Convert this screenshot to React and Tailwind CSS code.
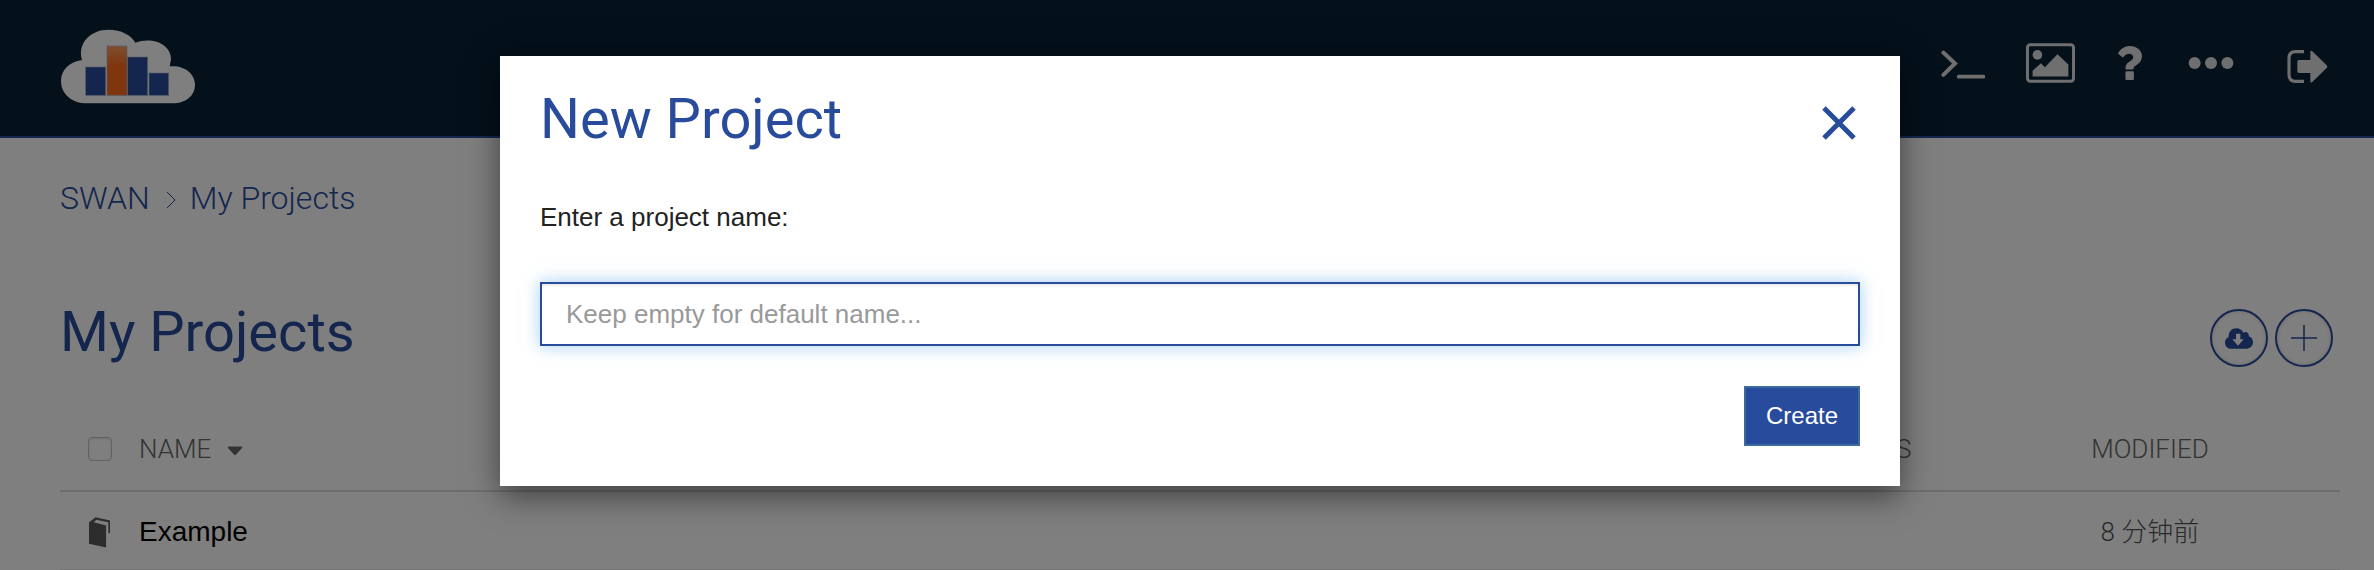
import React from "react";

const headings = "font-['Roboto',sans-serif]";

function Logo() {
  return (
    <svg viewBox="60 55 408 225" className="h-[75px] w-[136px]" role="img" aria-label="SWAN">
      <defs>
        <linearGradient id="bar" x1="0" y1="0" x2="0" y2="1">
          <stop offset="0" stopColor="#ff9f62" />
          <stop offset="0.4" stopColor="#ff6c1e" />
          <stop offset="1" stopColor="#ff6c1e" />
        </linearGradient>
      </defs>
      <path
        fill="#fff"
        d="M140 278C96 278 63 250 63 211C63 178 88 153 126 148C112 98 150 57 206 57C243 57 274 73 286 96C340 77 394 103 393 146L389 167C432 163 465 188 465 222C465 256 436 278 398 278Z"
      />
      <g stroke="#a9b0c4" strokeWidth="2">
        <rect x="137" y="169" width="60" height="85" fill="#284c9b" />
        <rect x="201" y="106" width="60" height="148" fill="url(#bar)" />
        <rect x="263" y="139" width="60" height="115" fill="#284c9b" />
        <rect x="327" y="187" width="59" height="67" fill="#284c9b" />
      </g>
    </svg>
  );
}

function HeaderButton({ label, className, children }) {
  return (
    <button type="button" aria-label={label} className={`block text-[#dedede] ${className}`}>
      {children}
    </button>
  );
}

function Header() {
  return (
    <header className="flex h-[138px] items-start justify-between border-b-2 border-[#284c9b] bg-[#092134] pt-[29px] pr-[46px] pl-[60px]">
      <a href="#home">
        <Logo />
      </a>
      <nav className="flex items-center pt-[13px]" aria-label="Tools">
        <HeaderButton label="Terminal" className="mt-1 mr-[41px]">
          <svg viewBox="126 95 132 86" className="h-[29px] w-11" fill="none" stroke="currentColor" strokeWidth="9" strokeLinecap="round" strokeLinejoin="round">
            <path d="M133 102L168 135L133 169" strokeWidth="12" strokeLinejoin="miter" />
            <path d="M179 174.500H254" strokeWidth="11" />
          </svg>
        </HeaderButton>
        <HeaderButton label="Gallery" className="mr-[43px]">
          <svg viewBox="381 71 148 119" className="h-10 w-[49px]" fill="currentColor">
            <rect x="385.500" y="75.500" width="139" height="110" rx="8" fill="none" stroke="currentColor" strokeWidth="9" />
            <circle cx="415.500" cy="106" r="14.500" />
            <path d="M401 171V154L426 131L438 143L476 104L509 135V171Z" />
          </svg>
        </HeaderButton>
        <HeaderButton label="Help" className="mr-[46px]">
          <svg viewBox="656 80 71 101" className="h-[34px] w-6" fill="currentColor">
            <path d="M681 155h19q3 0 3 3v20q0 3-3 3h-19q-3 0-3-3v-20q0-3 3-3zM727 109c0 16-8 22-17 28c-5 3-8 6-8 10q0 3-3 3h-18q-3 0-3-3c0-13 7-18 14-22c7-4 9-7 9-12c0-6-6-10-12-10c-7 0-11 3-17 10q-2 2-4 0l-11-9q-2-2 0-4c8-13 19-20 35-20c18 0 35 13 35 29z" />
          </svg>
        </HeaderButton>
        <HeaderButton label="More" className="mr-[53px]">
          <svg viewBox="864 117 138 37" className="h-3 w-[46px]" fill="currentColor">
            <circle cx="882.500" cy="135.500" r="18.500" />
            <circle cx="933" cy="135.500" r="18.500" />
            <circle cx="983.500" cy="135.500" r="18.500" />
          </svg>
        </HeaderButton>
        <HeaderButton label="Sign out" className="mt-2">
          <svg viewBox="1161 96 121 99" className="h-[33px] w-[41px]" fill="currentColor">
            <path d="M1211 101H1186Q1166 101 1166 121V170Q1166 190 1186 190H1211" fill="none" stroke="currentColor" strokeWidth="9.500" />
            <path d="M1196 126H1230V102Q1230 96 1236 100L1279 142Q1283 146 1279 150L1236 192Q1230 196 1230 190V165H1196Q1191 165 1191 160V131Q1191 126 1196 126Z" />
          </svg>
        </HeaderButton>
      </nav>
    </header>
  );
}

function Breadcrumb() {
  return (
    <nav aria-label="Breadcrumb" className={`${headings} flex items-center text-[32px] leading-10 font-light text-[#284c9b]`}>
      <a href="#swan">SWAN</a>
      <svg viewBox="0 0 10 18" className="mt-1 mr-[14px] ml-4 h-[18px] w-[10px]" fill="none" stroke="currentColor" aria-hidden="true">
        <path d="M1 1L9 9L1 17" />
      </svg>
      <a href="#projects">My Projects</a>
    </nav>
  );
}

function CircleButton({ label, children }) {
  return (
    <button type="button" aria-label={label} className="flex size-[58px] items-center justify-center rounded-full border-2 border-[#284c9b] text-[#284c9b] shadow-[inset_0_0_4px_rgba(0,0,0,0.15)]">
      {children}
    </button>
  );
}

function ProjectsTable() {
  return (
    <table className="w-full table-fixed border-collapse text-[26px] leading-8">
      <thead className={`${headings} text-[#666666]`}>
        <tr className="h-[84px] border-b-2 border-[#dddddd]">
          <th className="w-3/4 p-0 text-left font-light">
            <div className="flex items-center pl-7">
              <input type="checkbox" aria-label="Select all" className="size-6 appearance-none rounded-[4px] border border-[#c4c4c4] bg-white shadow-[inset_0_1px_3px_rgba(0,0,0,0.15)]" />
              <button type="button" className="ml-[27px] flex items-center gap-4">
                NAME
                <svg viewBox="0 0 16 10" className="mt-1 h-[10px] w-4 text-[#666666]" fill="currentColor" aria-hidden="true">
                  <path d="M1.500 0.500H14.500Q16 1 15 2L9 8.500Q8 9.500 7 8.500L1 2Q0 1 1.500 0.500Z" />
                </svg>
              </button>
            </div>
          </th>
          <th className="w-1/12 p-0 text-center font-light">STATUS</th>
          <th className="w-1/6 p-0 text-center font-light">MODIFIED</th>
        </tr>
      </thead>
      <tbody>
        <tr className="h-[78px] border-b border-[#e8e8e8]">
          <td className="px-0 pt-1 pb-0">
            <a href="#example" className="flex items-center pl-[29px] text-black">
              <svg viewBox="147 321 64 93" className="h-[31px] w-[21px] text-[#5a5a5a]" fill="currentColor" aria-hidden="true">
                <path d="M147 336L167 321L211 331V369L206 370V336L169 329L162 336L199 346V413L147 402Z" />
              </svg>
              <span className="ml-[29px] text-[28px]">Example</span>
            </a>
          </td>
          <td className="p-0" />
          <td className="px-0 pt-1 pb-0 text-center font-['Roboto','Noto_Sans_CJK_SC',sans-serif] font-light text-[#555555]">8 分钟前</td>
        </tr>
      </tbody>
    </table>
  );
}

function NewProjectDialog() {
  return (
    <div className="absolute inset-0 flex items-start justify-center bg-black/50 pt-14 pl-[26px]">
      <form role="dialog" aria-modal="true" aria-labelledby="dialog-title" onSubmit={(e) => e.preventDefault()} className="w-full max-w-[1400px] bg-white p-10 shadow-[0_10px_30px_rgba(0,0,0,0.5)]">
        <div className="flex items-start justify-between">
          <h2 id="dialog-title" className={`${headings} text-[56px] leading-[46px] text-[#284c9b]`}>New Project</h2>
          <button type="button" aria-label="Close" className="mt-[9px] mr-[3px] text-[#284c9b]">
            <svg viewBox="0 0 36 36" className="size-9" fill="none" stroke="currentColor" strokeWidth="5">
              <path d="M3 3L33 33M33 3L3 33" />
            </svg>
          </button>
        </div>
        <label htmlFor="project-name" className="mt-[55px] block text-[26px] leading-10 text-[#222222]">Enter a project name:</label>
        <input id="project-name" type="text" placeholder="Keep empty for default name..." className="mt-[45px] block h-16 w-full border-2 border-[#284c9b] bg-white px-6 text-[26px] text-[#333333] shadow-[inset_0_2px_2px_rgba(0,0,0,0.075),0_0_16px_rgba(102,175,233,0.6)] outline-none placeholder:text-[#999999]" />
        <div className="mt-10 flex justify-end">
          <button type="submit" className="h-[60px] border-2 border-[#3c6a9f] bg-[#284c9b] px-5 text-[24px] text-white">Create</button>
        </div>
      </form>
    </div>
  );
}

export default function App() {
  return (
    <div className="relative min-h-screen overflow-hidden bg-white font-['Liberation_Sans',Arial,sans-serif]">
      <Header />
      <main className="pt-10 pr-[34px] pl-[60px]">
        <Breadcrumb />
        <div className="mt-[79px] flex items-end justify-between pr-[7px]">
          <h1 className={`${headings} text-[56px] leading-[70px] text-[#284c9b]`}>My Projects</h1>
          <div className="flex gap-[7px]">
            <CircleButton label="Download project">
              <svg viewBox="673 113 84 61" className="h-[21px] w-7" fill="currentColor">
                <path fillRule="evenodd" d="M691 174C680 174 673 166 673 156C673 148 677 142 684 139C683 124 693 113 707 113C717 113 724 118 728 126C736 120 747 127 744 137C752 139 757 146 757 155C757 166 749 174 738 174ZM706 129V146H695L712 165L729 146H719V129Z" />
              </svg>
            </CircleButton>
            <CircleButton label="New project">
              <svg viewBox="0 0 26 26" className="size-[26px]" fill="none" stroke="currentColor" strokeWidth="1.500">
                <path d="M13 0V26M0 13H26" />
              </svg>
            </CircleButton>
          </div>
        </div>
        <div className="mt-10">
          <ProjectsTable />
        </div>
      </main>
      <NewProjectDialog />
    </div>
  );
}
